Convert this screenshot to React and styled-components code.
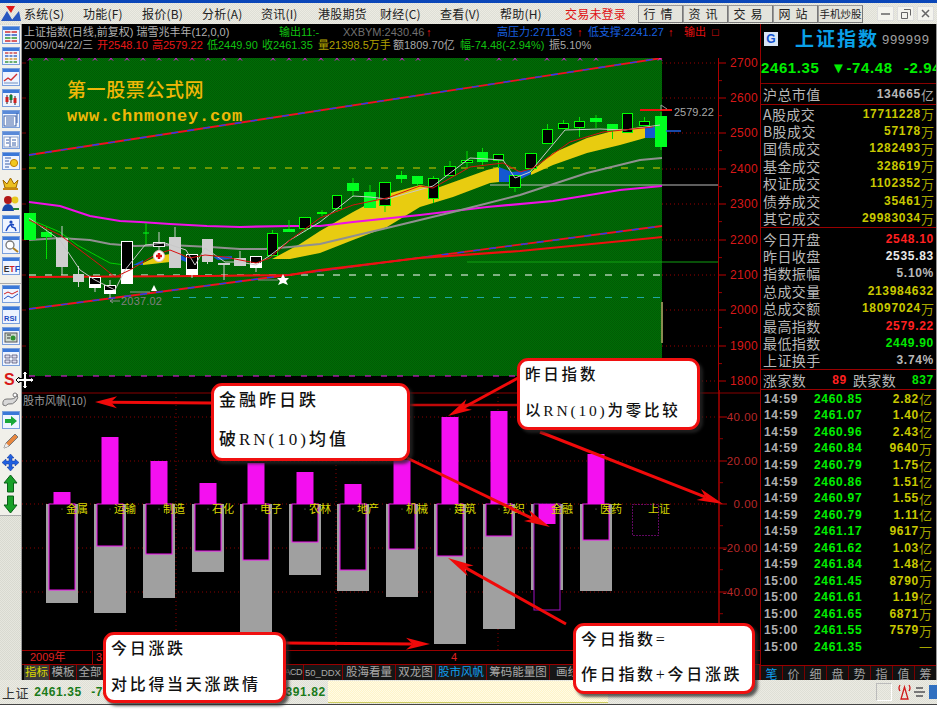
import React from 'react';
import styled, { createGlobalStyle } from 'styled-components';

const SANS = '"Liberation Sans","Noto Sans CJK SC",sans-serif';
const CJK = '"Noto Sans CJK SC","Liberation Sans",sans-serif';
const SERIF = '"Liberation Serif","Noto Sans CJK SC",serif';
const DITHER = 'repeating-conic-gradient(#ecebe3 0 25%, #dedfd6 0 50%) 0 0/2px 2px';

const Global = createGlobalStyle`
  html, body { margin: 0; padding: 0; background: #fff; }
  #root { width: 943px; height: 713px; overflow: hidden; position: relative; }
`;
const Page = styled.div`width:943px;height:713px;position:relative;background:#fff;overflow:hidden;`;
const Win = styled.div`width:937px;height:705px;display:flex;flex-direction:column;border-bottom:1px solid #444;box-sizing:border-box;`;
const TitleLine = styled.div`height:3px;background:#0a46b8;`;
const MenuBar = styled.div`height:21px;display:flex;align-items:center;background:${DITHER};font-family:${CJK};font-size:12px;color:#222;`;
const Logo = styled.div`width:27px;height:21px;display:flex;align-items:center;`;
const MenuItem = styled.div`width:${p=>p.$w}px;flex:none;white-space:nowrap;color:${p=>p.$c||'#222'};letter-spacing:.2px;`;
const TopBtn = styled.div`width:45px;height:18px;flex:none;box-sizing:border-box;display:flex;align-items:center;justify-content:center;white-space:nowrap;border:1px solid #999;border-right-color:#777;border-bottom-color:#777;background:#e4e4dc;letter-spacing:${p=>p.$s}px;font-size:${p=>p.$fs||12}px;color:#222;`;
const WinBtn = styled.div`width:17px;height:15px;flex:none;margin-right:3px;display:flex;align-items:center;justify-content:center;background:#f4f4ee;border:1px solid #ddd;box-sizing:border-box;color:#777;`;
const MenuGap = styled.div`width:${p=>p.$w}px;flex:none;`;
const Body = styled.div`height:656px;display:flex;`;
const ToolBar = styled.div`width:22px;flex:none;display:flex;flex-direction:column;background:repeating-conic-gradient(#e6e6de 0 25%, #d8d9d0 0 50%) 0 0/2px 2px;box-sizing:border-box;border-right:1px solid #999;padding-top:.5px;`;
const ToolCell = styled.div`height:21px;flex:none;display:flex;align-items:center;justify-content:center;background:#f1f0ea;`;
const ToolSep = styled.div`height:${p=>p.$h}px;flex:none;background:#f1f0ea;border-bottom:1px solid #aaa;box-sizing:border-box;`;
const ChartCol = styled.div`width:738px;flex:none;display:flex;flex-direction:column;background:#000;`;
const ChartHead = styled.div`height:34px;flex:none;padding:2px 0 0 2px;box-sizing:border-box;font-family:${SANS};font-size:11px;display:flex;flex-direction:column;`;
const HeadRow = styled.div`height:13px;display:flex;align-items:center;white-space:nowrap;`;
const HeadCell = styled.span`width:${p=>p.$w}px;flex:none;color:${p=>p.$c};white-space:nowrap;letter-spacing:${p=>p.$s||0}px;line-height:1;`;
const ChartSvg = styled.svg`display:block;flex:none;`;
const DateBar = styled.div`height:15px;flex:none;display:flex;border-top:1px solid #900;border-bottom:1px solid #900;box-sizing:border-box;font-family:${SANS};font-size:11px;color:#e02020;`;
const DateCell = styled.div`width:${p=>p.$w}px;flex:none;padding-left:${p=>p.$pl||0}px;box-sizing:border-box;border-right:${p=>p.$b?'1px solid #900':'none'};line-height:13px;`;
const TabBar = styled.div`height:15px;flex:none;display:flex;font-family:${SANS};font-size:11.5px;line-height:1;padding-left:2px;border-bottom:1px solid #800;box-sizing:content-box;`;
const Tab = styled.div`width:${p=>p.$w}px;flex:none;box-sizing:border-box;display:flex;align-items:center;justify-content:${p=>p.$end?'flex-end':'center'};padding-right:${p=>p.$end?1:0}px;white-space:nowrap;font-size:${p=>p.$fs||11.5}px;letter-spacing:${p=>p.$ls||0}px;border-right:1px solid #800;background:${p=>p.$bg||'#161616'};color:${p=>p.$c||'#a8a8a8'};`;
const Panel = styled.div`width:177px;flex:none;background:#000;border-left:1px solid #900;border-right:1px solid #999;box-sizing:border-box;display:flex;flex-direction:column;overflow:hidden;font-family:${CJK};`;
const NameRow = styled.div`height:28px;flex:none;display:flex;align-items:center;padding:2px 0 0 3px;box-sizing:border-box;`;
const GIcon = styled.div`width:14px;height:14px;background:#d8e4f4;color:#1050d0;font:700 12px ${SANS};display:flex;align-items:center;justify-content:center;margin-right:17px;`;
const IndexName = styled.div`font:700 19px/1 ${SERIF};color:#0aa0e8;letter-spacing:2px;width:87px;white-space:nowrap;`;
const IndexCode = styled.div`font:13px ${SANS};color:#a0a0a0;letter-spacing:.7px;`;
const PriceRow = styled.div`height:32px;flex:none;display:flex;align-items:center;font:700 15px ${SANS};color:#0e0;letter-spacing:.6px;border-bottom:1px solid #800;box-sizing:border-box;white-space:nowrap;`;
const PriceCell = styled.div`width:${p=>p.$w}px;flex:none;`;
const Block = styled.div`height:${p=>p.$h}px;flex:none;box-sizing:border-box;border-bottom:1px solid #900;display:flex;flex-direction:column;padding-top:${p=>p.$pt||0}px;`;
const DataRow = styled.div`height:${p=>p.$h||17.4}px;flex:none;display:flex;align-items:center;justify-content:space-between;padding:0 2px 0 2px;`;
const Label = styled.span`font-size:14px;color:#b8b8b8;letter-spacing:.4px;line-height:1;white-space:nowrap;`;
const Val = styled.span`font:700 12px/1 ${SANS};color:${p=>p.$c};letter-spacing:.7px;white-space:nowrap;display:flex;align-items:center;margin-left:${p=>p.$ml||'0'};margin-right:${p=>p.$mr||0}px;`;
const Unit = styled.span`font:13px/1 ${CJK};color:${p=>p.$c||'#a6a600'};letter-spacing:0;`;
const Updown = styled.div`height:20px;flex:none;box-sizing:border-box;border-bottom:1px solid #900;display:flex;align-items:center;padding:0 2px 0 2px;`;
const TickList = styled.div`height:275px;flex:none;padding-top:.7px;box-sizing:border-box;`;
const TickRow = styled.div`height:16.53px;display:grid;grid-template-columns:50px 70px 1fr;align-items:center;padding:0 4px 0 3px;font:700 12px/1 ${SANS};letter-spacing:.7px;`;
const TickTime = styled.span`color:#b0b0b0;`;
const TickPrice = styled.span`color:#0e0;`;
const TickVol = styled.span`color:#c8c800;display:flex;justify-content:flex-end;align-items:center;`;
const PanelTabs = styled.div`height:15px;flex:none;display:flex;border-top:1px solid #900;border-bottom:1px solid #800;box-sizing:content-box;background:#111;`;
const PanelTab = styled.div`width:22px;flex:none;display:flex;align-items:center;justify-content:center;box-sizing:border-box;border-right:1px solid #700;font-size:12px;line-height:1;color:${p=>p.$c||'#a0a0a0'};`;
const Status = styled.div`height:24px;flex:none;display:flex;align-items:center;background:${DITHER};font:700 12px ${SANS};color:#1a7a1a;letter-spacing:.6px;`;
const StatusCell = styled.div`width:${p=>p.$w}px;flex:none;white-space:nowrap;`;
const StatusLabel = styled.span`font:13px ${CJK};color:#333;margin:0 5px 0 2px;`;
const NoteArea = styled.div`width:280px;height:22px;flex:none;background:repeating-conic-gradient(#fffbe6 0 25%, #fff4c8 0 50%) 0 0/2px 2px;border-bottom:1px solid #cccc60;box-sizing:border-box;`;
const StatusFill = styled.div`flex:1;`;
const StatusBox = styled.div`width:16px;height:18px;border:1px solid #bbb;border-right-color:#fff;border-bottom-color:#fff;margin-right:5px;box-sizing:border-box;`;
const StatusIcon = styled.div`width:15px;flex:none;display:flex;justify-content:center;`;
const StatusEdge = styled.div`width:8px;height:14px;background:#3070c0;margin-left:2px;flex:none;`;
const Callout = styled.div`position:absolute;left:${p=>p.$x}px;top:${p=>p.$y}px;width:${p=>p.$w}px;height:${p=>p.$h}px;box-sizing:border-box;background:#fff;border:3px solid #f01010;border-radius:11px;box-shadow:3px 3px 3px rgba(40,40,40,.75);padding:${p=>p.$pt}px 0 0 5px;display:flex;flex-direction:column;gap:${p=>p.$gap}px;font-family:${SERIF};font-weight:500;font-size:${p=>p.$fs}px;line-height:20px;color:#111;letter-spacing:${p=>p.$ls}px;white-space:nowrap;`;
const Overlay = styled.svg`position:absolute;left:0;top:0;pointer-events:none;`;
const Cursor = styled.svg`position:absolute;left:15px;top:370px;`;

const Frame = ({ children, title = '#3a78d8' }) => (
  <svg width="18" height="18" viewBox="0 0 18 18">
    <rect x=".5" y=".5" width="17" height="17" fill="#eef4ff" stroke="#7aa0dc" />
    <rect x="1" y="1" width="16" height="3" fill={title} />
    {children}
  </svg>
);
const Plain = ({ children }) => <svg width="19" height="19" viewBox="0 0 19 19">{children}</svg>;
const Stripes = ({ c }) => [6, 9, 12, 15].map((y, i) => <line key={y} x1="3" x2="15" y1={y} y2={y} stroke={c[i % c.length]} strokeWidth="1.4" />);
const icons = [
  <Frame><Stripes c={['#d02020', '#2050c0', '#209020']} /><line x1="9" x2="9" y1="5" y2="16" stroke="#fff" /></Frame>,
  <Frame><Stripes c={['#d04040', '#3060c0', '#d09020', '#309030']} /><path d="M7 5V16M11 5V16" stroke="#fff" /></Frame>,
  <Frame><path d="M2 13L6 10L9 12L15 6" fill="none" stroke="#d03030" strokeWidth="1.4" /><path d="M2 15H16" stroke="#7090c0" /></Frame>,
  <Frame><path d="M5 6V15M9 5V14M13 7V16" stroke="#222" /><rect x="3.5" y="8" width="3" height="5" fill="#d02020" /><rect x="7.5" y="6" width="3" height="5" fill="#108030" /><rect x="11.5" y="9" width="3" height="5" fill="#d02020" /></Frame>,
  <Frame title="#5a8ad8"><rect x="2" y="6" width="12" height="10" fill="#fff" stroke="#3a60a8" /><path d="M4 8H12M4 10H12M4 12H12M4 14H12" stroke="#3a60a8" /><path d="M15 3V13" stroke="#3a60a8" /></Frame>,
  <Frame title="#5a8ad8"><rect x="2" y="6" width="14" height="10" fill="#fff" stroke="#8aa0c8" /><path d="M8 6V16M4 9H7M4 12H7M10 9H14M10 12H14M10 14H14" stroke="#3a60a8" /></Frame>,
  <Frame><path d="M3 6H9M3 9H7M3 12H8M3 15H7" stroke="#3a60a8" /><circle cx="12" cy="11" r="3.6" fill="#f0c820" stroke="#c08000" /></Frame>,
  <Plain><path d="M2 7L6 11L9.500 5L13 11L17 7L15 15H4Z" fill="#ecc020" stroke="#a06800" /><rect x="2" y="15" width="15" height="2" fill="#c88810" /></Plain>,
  <Plain><circle cx="7" cy="6" r="4" fill="#b01818" /><path d="M1 17Q2 10 7 10Q12 10 13 17Z" fill="#1848a8" /><circle cx="14" cy="6" r="3.400" fill="#e8c820" /><path d="M12 15H18" stroke="#208030" strokeWidth="2" /></Plain>,
  <Frame><circle cx="9" cy="7" r="1.600" fill="#1848c0" /><path d="M9 9L6 12L4 16M9 9L10 12L13 13L14 16M9 9L12 10" fill="none" stroke="#1848c0" strokeWidth="1.500" /></Frame>,
  <Frame><circle cx="8" cy="9" r="4" fill="#fff" stroke="#777" strokeWidth="1.300" /><path d="M11 12L16 16" stroke="#b08020" strokeWidth="2" /></Frame>,
  <Frame><text x="1.800" y="14.500" fontFamily={SANS} fontSize="8.500" fontWeight="700" fill="#333">E<tspan fill="#d02020">T</tspan><tspan fill="#1848c0">F</tspan></text></Frame>,
  null,
  <Frame><path d="M2 9L6 7L10 9L16 6" fill="none" stroke="#d02020" /><path d="M2 14L6 11L10 13L16 9" fill="none" stroke="#2050c0" /></Frame>,
  <Frame><text x="2" y="14.500" fontFamily={SANS} fontSize="7.500" fontWeight="700" fill="#1848c0">RSI</text></Frame>,
  <Frame><rect x="3" y="6" width="12" height="9" fill="#ccd8cc" stroke="#555" /><circle cx="11" cy="11" r="2.500" fill="#309030" /><path d="M5 8H9M5 11H8" stroke="#333" /></Frame>,
  <Frame><path d="M3 7H8V10H3ZM10 7H15V10H10ZM3 12H8V15H3ZM10 12H15V15H10Z" fill="#dde" stroke="#446" strokeWidth=".7" /></Frame>,
  <Plain><text x="3" y="16" fontFamily={SANS} fontSize="16" fontWeight="700" fill="#d81818">S</text></Plain>,
  <Plain><path d="M2 15Q1 9 6 9H10Q15 9 16 4Q18 8 15 11Q12 15 7 14Q5 17 2 15Z" fill="#d8d8d8" stroke="#777" /><circle cx="14" cy="5" r="2" fill="#fff" stroke="#777" /></Plain>,
  <Frame><path d="M3 8H9V5L15 10L9 15V12H3Z" fill="#18a838" /></Frame>,
  <Plain><path d="M3 16L5 11L14 2L17 5L8 14Z" fill="#e88840" stroke="#777" /><path d="M3 16L5 11L8 14Z" fill="#eee" /></Plain>,
  <Plain><path d="M9.500 1L13 5H11V8H14V6L18 9.500L14 13V11H11V14H13L9.500 18L6 14H8V11H5V13L1 9.500L5 6V8H8V5H6Z" fill="#2060e0" stroke="#103090" strokeWidth=".5" /></Plain>,
  <Plain><path d="M9.500 1L16 9H12.500V18H6.500V9H3Z" fill="#18a028" stroke="#0a6018" /></Plain>,
  <Plain><path d="M9.500 18L16 10H12.500V1H6.500V10H3Z" fill="#18a028" stroke="#0a6018" /></Plain>,
];

const CANDLES = [
  [24,36,213,240,213,240,'g'],[41,52,232,237,227,259,'g'],[56,68,238,267,226,275,'s'],[73,84,274,282,266,287,'s'],
  [89,101,277,288,277,292,'w',284],[104,116,285,294,280,298,'w',290],[121,133,241,284,241,284,'w',269],[143,149,233,233,223,245,'g'],
  [153,165,242,247,232,262,'wo'],[169,181,237,268,227,268,'s'],[186,198,254,275,254,278,'w',269],[202,213,239,262,239,264,'s'],
  [218,230,263,265,263,280,'s'],[234,246,258,266,251,266,'s'],[250,262,256,268,256,272,'w',263],[267,278,233,256,230,256,'o'],
  [283,295,229,232,220,232,'g'],[299,311,217,229,217,232,'o'],[317,327,212,214,210,216,'o'],[332,342,195,209,195,212,'o'],
  [347,359,183,191,178,197,'g'],[364,376,192,208,185,208,'g'],[379,391,182,206,182,212,'o'],[396,407,175,179,171,183,'g'],
  [412,423,176,184,176,186,'g'],[428,439,178,199,176,203,'o'],[444,456,166,176,161,176,'o'],[461,473,160,163,151,168,'o'],
  [477,488,152,162,148,166,'g'],[493,504,154,161,154,168,'o'],[509,521,175,188,175,192,'o'],[525,537,153,169,153,172,'o'],
  [542,553,129,144,124,144,'o'],[558,569,123,129,120,129,'o'],[574,585,121,128,117,137,'o'],[590,602,118,122,115,128,'g'],
  [607,618,124,131,124,139,'g'],[622,633,113,133,113,133,'o'],[639,650,121,126,117,126,'o'],[655,667,116,147,112,150,'g'],
];
const CROSS = [30,46,62,79,95,111,127,143,159,176,192,208,224,240,273,289,305,321,337,353,369,385,402,418,467,499,515,547,564,580,596,660];
const PRICES = [[2700,63],[2600,98],[2500,133],[2400,169],[2300,204],[2200,240],[2100,275],[2000,310],[1900,346],[1800,381]];
const pts = a => a.map(p => p.join(',')).join(' ');

const Candle = ({ c }) => {
  const [x0, x1, t, b, wt, wb, k, split] = c;
  const cx = (x0 + x1) / 2;
  const isG = k === 'g' || k === 'o';
  const w = x1 - x0, h = Math.max(b - t, 0.01);
  return (
    <g>
      <line x1={cx} x2={cx} y1={wt} y2={wb} stroke={isG ? '#00e000' : '#d0d0d0'} />
      {k === 'g' && h > 1 && <rect x={x0} y={t} width={w} height={h} fill="#00ff20" />}
      {k === 'g' && h <= 1 && <line x1={x0} x2={x1} y1={t} y2={t} stroke="#00ff20" />}
      {k === 'o' && <rect x={x0 + .5} y={t + .5} width={w - 1} height={h - 1} fill="#000" stroke="#00ff00" />}
      {k === 's' && <rect x={x0} y={t} width={w} height={h} fill="#cfcfcf" />}
      {k === 'wo' && <rect x={x0 + .5} y={t + .5} width={w - 1} height={h - 1} fill="#000" stroke="#eee" />}
      {k === 'w' && <><rect x={x0} y={t} width={w} height={h} fill="#fff" /><rect x={x0 + 1} y={t + 1} width={w - 2} height={split - t - 1} fill="#000" /></>}
    </g>
  );
};

const MainChart = () => (
  <ChartSvg width="738" height="332" viewBox="22 58 738 332">
    <defs>
      <pattern id="gd" width="2" height="2" patternUnits="userSpaceOnUse">
        <rect width="2" height="2" fill="#006c06" /><rect width="1" height="1" fill="#005c04" /><rect x="1" y="1" width="1" height="1" fill="#005c04" />
      </pattern>
    </defs>
    <rect x="29" y="58" width="633" height="318" fill="url(#gd)" />
    {PRICES.map(([v, y]) => <g key={v}>
      <line x1="662" x2="718" y1={y} y2={y} stroke="#900" strokeDasharray="1 3" />
      <line x1="718" x2="726" y1={y} y2={y} stroke="#b00" />
      <line x1="718" x2="722" y1={y + 17.600} y2={y + 17.600} stroke="#900" />
      <line x1="22" x2="26" y1={y} y2={y} stroke="#700" />
      <text x="758" y={y + 4} textAnchor="end" fontFamily={SANS} fontSize="12" fill="#d81818" letterSpacing=".3">{v}</text>
    </g>)}
    <line x1="718.500" x2="718.500" y1="58" y2="390" stroke="#a00" />
    <line x1="29" x2="662" y1="168" y2="168" stroke="#d8c800" strokeDasharray="7 9" />
    <line x1="29" x2="662" y1="275" y2="275" stroke="#fff" strokeDasharray="7 9" />
    <line x1="173" x2="662" y1="297.500" y2="297.500" stroke="#20a8a8" strokeDasharray="7 9" />
    <line x1="490" x2="718" y1="185" y2="185" stroke="#bbb" />
    <line x1="467" x2="718" y1="262" y2="262" stroke="#10a010" />
    <line x1="29" x2="662" y1="376" y2="376" stroke="#f010f0" strokeDasharray="6 10" />
    <line x1="662" x2="662" y1="302" y2="343" stroke="#8a8a50" strokeWidth="2" />
    <text x="67" y="97" fontFamily={SERIF} fontSize="19" fontWeight="500" fill="#f0b808" letterSpacing=".6">第一股票公式网</text>
    <text x="67" y="121" fontFamily='"Liberation Mono",monospace' fontSize="17" fontWeight="700" fill="#f0b808" letterSpacing=".8">www.chnmoney.com</text>
    {[[29,155,662,58],[29,309,662,226]].map((l, i) => <g key={i}>
      <line x1={l[0]} y1={l[1]} x2={l[2]} y2={l[3]} stroke="#f01020" strokeWidth="1.800" />
      <line x1={l[0]} y1={l[1]} x2={l[2]} y2={l[3]} stroke="#2040f0" strokeWidth="1.400" strokeDasharray="7 9" />
    </g>)}
    <polygon fill="#e8cc10" points={pts([[272,259],[300,244],[320,231],[353,212],[387,194],[420,185],[437,188],[487,170],[499,167],[499,182],[490,183],[453,197],[420,207],[387,227],[353,240],[320,253],[290,259]])} />
    <polygon fill="#1458d0" points={pts([[499,167],[512,172],[530,170],[531,174],[515,182],[499,182]])} />
    <polygon fill="#e8cc10" points={pts([[531,172],[553,153],[587,138],[620,129],[645,127],[645,138],[620,145],[587,153],[553,165],[531,175]])} />
    <polygon fill="#1458d0" points={pts([[645,127],[656,127],[656,138],[645,138]])} />
    <polygon fill="#e8cc10" points={pts([[143,263],[158,256],[170,254],[170,262],[143,265]])} />
    <polygon fill="#1458d0" points={pts([[133,265],[143,260],[143,265]])} />
    <polygon fill="#1458d0" points={pts([[181,255],[186,258],[186,262],[181,260]])} />
    <polygon fill="#1458d0" points={pts([[213,257],[232,256],[232,259],[218,260]])} />
    <polyline fill="none" stroke="#ee1010" strokeWidth="2.200" points={pts([[29,277],[207,276],[290,275],[320,270],[420,258],[520,251],[653,238],[662,237]])} />
    <polyline fill="none" stroke="#f010e8" strokeWidth="2.200" points={pts([[29,202],[60,206],[90,216],[120,221],[140,222],[170,224],[207,226],[240,227],[290,226],[320,226],[353,222],[420,215],[487,207],[553,201],[620,190],[662,186]])} />
    <polyline fill="none" stroke="#909090" strokeWidth="2" points={pts([[29,240],[60,238],[90,240],[110,244],[135,246],[170,245],[190,246],[210,247],[240,249],[265,249],[290,247],[320,244],[387,228],[453,212],[520,195],[587,173],[640,160],[662,158]])} />
    <polyline fill="none" stroke="#00d000" strokeWidth="1" points={pts([[29,219],[60,232],[77,245],[110,263],[125,265]])} />
    {CANDLES.map((c, i) => <Candle key={i} c={c} />)}
    <polyline fill="none" stroke="#c8c8c8" strokeWidth="1" points={pts([[29,218],[60,240],[80,270],[95,280],[115,290],[125,270],[145,245],[165,243],[186,250],[195,265],[205,248],[225,262],[240,262],[256,265],[272,254],[290,240],[320,222],[353,196],[370,197],[387,199],[433,186],[470,158],[503,160],[515,178],[530,172],[565,130],[600,129],[625,130],[660,125]])} />
    <polyline fill="none" stroke="#d81010" strokeWidth="1" points={pts([[29,220],[60,235],[80,250],[100,265],[115,277],[130,270],[155,255],[170,250],[190,258],[205,255],[225,257],[240,260],[256,263],[270,258],[290,240],[320,218],[353,205],[387,198],[420,186],[433,188],[470,167],[503,163],[520,172],[533,168],[570,142],[603,132],[653,127]])} />
    <circle cx="159" cy="256" r="5.500" fill="#fff" stroke="#e8c0c0" /><path d="M156 256H162M159 253V259" stroke="#e01010" strokeWidth="2.500" />
    <polygon fill="#fff" points="154,285 157,291 151,291" />
    <line x1="258" x2="278" y1="280" y2="280" stroke="#888" />
    <polygon fill="#fff" points={pts([[283,274],[285,278],[289,278],[286,281],[288,285],[283,283],[278,285],[280,281],[277,278],[281,278]])} />
    <line x1="130" x2="150" y1="292" y2="292" stroke="#999" />
    <path d="M110 301H120M110 301L113 299M110 301L113 303" stroke="#8a8a8a" fill="none" />
    <text x="121" y="305" fontFamily={SANS} fontSize="11" fill="#808080" letterSpacing=".2">2037.02</text>
    <line x1="640" x2="672" y1="110" y2="110" stroke="#f01010" strokeWidth="2" />
    <path d="M661 105L667 109M661 105V110" stroke="#999" fill="none" />
    <text x="674" y="116" fontFamily={SANS} fontSize="11" fill="#a8a8a8">2579.22</text>
    <line x1="666" x2="681" y1="131" y2="131" stroke="#2060e0" strokeWidth="1.500" />
    {CROSS.map(x => <g key={x} stroke="#f010f0"><line x1={x - 2} x2={x + 2} y1="56.500" y2="60.500" /><line x1={x - 2} x2={x + 2} y1="60.500" y2="56.500" /></g>)}
  </ChartSvg>
);

const SECTORS = [
  ['金属',46,603,590,492],['运输',94,613,546,437],['制造',143,598,554,461],['石化',192,572,551,483],
  ['电子',240,632,560,463],['农林',289,575,542,472],['地产',337,591,570,484],['机械',386,597,549,460],
  ['建筑',434,644,556,417],['纺织',483,629,536,411],
];
const LEVELS = [['40.00',417],['20.00',461],['0.00',504],['-20.00',548],['-40.00',592]];

const Sector = ({ x, name, gray, out, bar, dim }) => (
  <g>
    <rect x={x} y="504" width="32" height={gray - 504} fill="#a0a0a0" />
    <rect x={x + 3} y="504" width="26" height={out - 504} fill="#000" stroke={dim ? '#a010c0' : '#f010f0'} />
    {bar < 504
      ? <rect x={x + 7.500} y={bar} width="17" height={504 - bar} fill="#f410f0" />
      : <rect x={x + 7.500} y="504" width="17" height={bar - 504} fill="#f410f0" />}
    <text x={x + 20} y="513" fontFamily={CJK} fontSize="11" fill="#d8d800">{name}</text>
    <circle cx={x + 16} cy="509" r=".6" fill="#888" />
  </g>
);

const Indicator = () => (
  <ChartSvg width="738" height="260" viewBox="22 390 738 260">
    <line x1="22" x2="760" y1="393" y2="393" stroke="#800" />
    <line x1="719" x2="719" y1="390" y2="650" stroke="#a00" strokeWidth="1.500" />
    {LEVELS.map(([t, y]) => <g key={t}>
      <line x1="22" x2="719" y1={y} y2={y} stroke="#800" strokeDasharray="1 3" />
      <line x1="719" x2="727" y1={y} y2={y} stroke="#b00" />
      <line x1="719" x2="723" y1={y + 21.700} y2={y + 21.700} stroke="#800" />
      <text x="758" y={y + 4} textAnchor="end" fontFamily={SANS} fontSize="11.500" fill="#b82828" letterSpacing=".5">{t}</text>
    </g>)}
    {[176, 336, 498].map(x => <line key={x} x1={x} x2={x} y1="393" y2="650" stroke="#800" strokeDasharray="1 3" />)}
    <text x="23" y="405" fontFamily={CJK} fontSize="11" fill="#9a9a9a">股市风帆(10)</text>
    {SECTORS.map(s => <Sector key={s[0]} name={s[0]} x={s[1]} gray={s[2]} out={s[3]} bar={s[4]} />)}
    <Sector name="金融" x={531} gray={590} out={610} bar={524} dim />
    <Sector name="医药" x={580} gray={591} out={540} bar={454} />
    <rect x="632.500" y="504.500" width="26" height="31" fill="none" stroke="#c010c0" strokeDasharray="1 2" />
    <text x="648" y="513" fontFamily={CJK} fontSize="11" fill="#d8d800">上证</text>
  </ChartSvg>
);

const ROWS_A = [['A股成交','17711228'],['B股成交','57178'],['国债成交','1282493'],['基金成交','328619'],['权证成交','1102352'],['债券成交','35461'],['其它成交','29983034']];
const ROWS_B = [['今日开盘','2548.10','#ff2020'],['昨日收盘','2535.83','#e8e8e8'],['指数振幅','5.10%','#b8b8b8'],['总成交量','213984632','#c8c800'],['总成交额','18097024','#c8c800','万'],['最高指数','2579.22','#ff2020'],['最低指数','2449.90','#00e800'],['上证换手','3.74%','#b8b8b8']];
const TICKS = [['14:59','2460.85','2.82','亿'],['14:59','2461.07','1.40','亿'],['14:59','2460.96','2.43','亿'],['14:59','2460.84','9640','万'],['14:59','2460.79','1.75','亿'],['14:59','2460.86','1.51','亿'],['14:59','2460.97','1.55','亿'],['14:59','2460.79','1.11','亿'],['14:59','2461.17','9617','万'],['14:59','2461.62','1.03','亿'],['14:59','2461.84','1.48','亿'],['15:00','2461.45','8790','万'],['15:00','2461.61','1.19','亿'],['15:00','2461.65','6871','万'],['15:00','2461.55','7579','万'],['15:00','2461.35','','一']];

const RightPanel = () => (
  <Panel>
    <NameRow><GIcon>G</GIcon><IndexName>上证指数</IndexName><IndexCode>999999</IndexCode></NameRow>
    <PriceRow><PriceCell $w={70}>2461.35</PriceCell><PriceCell $w={73}>▼-74.48</PriceCell><PriceCell $w={33}>-2.94</PriceCell></PriceRow>
    <Block $h={21}><DataRow $h={20}><Label>沪总市值</Label><Val $c="#b8b8b8">134665<Unit $c="#a8a8a8">亿</Unit></Val></DataRow></Block>
    <Block $h={123}>{ROWS_A.map(r => <DataRow key={r[0]}><Label>{r[0]}</Label><Val $c="#c8c800">{r[1]}<Unit>万</Unit></Val></DataRow>)}</Block>
    <Block $h={142} $pt={2}>{ROWS_B.map(r => <DataRow key={r[0]}><Label>{r[0]}</Label><Val $c={r[2]}>{r[1]}{r[3] && <Unit>{r[3]}</Unit>}</Val></DataRow>)}</Block>
    <Updown><Label>涨家数</Label><Val $c="#ff2020" $ml="26px" $mr={6}>89</Val><Label>跌家数</Label><Val $c="#00e800" $ml="auto">837</Val></Updown>
    <TickList>{TICKS.map((t, i) => <TickRow key={i}><TickTime>{t[0]}</TickTime><TickPrice>{t[1]}</TickPrice><TickVol>{t[2]}<Unit>{t[3]}</Unit></TickVol></TickRow>)}</TickList>
    <PanelTabs>{['笔','价','细','盘','势','指','值','筹'].map((t, i) => <PanelTab key={t} $c={i === 0 ? '#10a0f0' : undefined}>{t}</PanelTab>)}</PanelTabs>
  </Panel>
);

const TABS = [
  { t: '指标', w: 26, c: '#d8d800', bg: '#3a3a3a' }, { t: '模板', w: 27 }, { t: '全部', w: 27 }, { t: '', w: 160 },
  { t: 'MACD', w: 40, end: true, fs: 9, ls: -.5 }, { t: '50_DDX', w: 39, fs: 9.500 }, { t: '股海看量', w: 53 }, { t: '双龙图', w: 40 },
  { t: '股市风帆', w: 51, c: '#10a0f0' }, { t: '筹码能量图', w: 63 }, { t: '画线', w: 36 }, { t: '', w: 174 },
];

const Arrow = ({ a, b, h = 20, w = 8, sw = 3, c = '#f00a0a' }) => {
  const dx = b[0] - a[0], dy = b[1] - a[1], L = Math.hypot(dx, dy), ux = dx / L, uy = dy / L, nx = -uy, ny = ux;
  const base = [b[0] - ux * h, b[1] - uy * h], notch = [b[0] - ux * h * .72, b[1] - uy * h * .72];
  return <g>
    <line x1={a[0]} y1={a[1]} x2={notch[0]} y2={notch[1]} stroke={c} strokeWidth={sw} />
    <polygon fill={c} points={pts([b, [base[0] + nx * w, base[1] + ny * w], notch, [base[0] - nx * w, base[1] - ny * w]])} />
  </g>;
};

export default function App() {
  return (
    <Page>
      <Global />
      <Win>
        <TitleLine />
        <MenuBar>
          <Logo><svg width="24" height="20" viewBox="0 0 24 20"><path d="M6 2L15 2L11 9Z" fill="#e01818" /><path d="M1 17L7 7L13 17Z" fill="#2858c0" /><path d="M11 17L19 7L21 17Z" fill="#2858c0" /></svg></Logo>
          <MenuItem $w={59}>系统(S)</MenuItem><MenuItem $w={59}>功能(F)</MenuItem><MenuItem $w={60}>报价(B)</MenuItem><MenuItem $w={59}>分析(A)</MenuItem><MenuItem $w={57}>资讯(I)</MenuItem><MenuItem $w={62}>港股期货</MenuItem><MenuItem $w={60}>财经(C)</MenuItem><MenuItem $w={60}>查看(V)</MenuItem><MenuItem $w={65}>帮助(H)</MenuItem>
          <MenuItem $w={73} $c="#e01010">交易未登录</MenuItem>
          <TopBtn $s={5}>行情</TopBtn><TopBtn $s={5}>资讯</TopBtn><TopBtn $s={5}>交易</TopBtn><TopBtn $s={5}>网站</TopBtn><TopBtn $s={0} $fs={10.500}>手机炒股</TopBtn>
          <MenuGap $w={14} />
          <WinBtn><svg width="9" height="9"><path d="M0 5H9" stroke="#666" strokeWidth="1.500" /></svg></WinBtn>
          <WinBtn><svg width="10" height="10"><path d="M3 .5H9.500V6.500M.5 3.500H6.500V9.500H.5Z" fill="none" stroke="#666" /></svg></WinBtn>
          <WinBtn><svg width="9" height="9"><path d="M1 1L8 8M8 1L1 8" stroke="#666" strokeWidth="1.500" /></svg></WinBtn>
        </MenuBar>
        <Body>
          <ToolBar>
            {icons.map((ic, i) => ic
              ? <ToolCell key={i}>{ic}</ToolCell>
              : <ToolSep key={i} $h={7} />)}
            <ToolSep $h={1} />
          </ToolBar>
          <ChartCol>
            <ChartHead>
              <HeadRow>
                <HeadCell $w={255} $c="#b0b0b0">上证指数(日线,前复权) 瑞雪兆丰年(12,0,0)</HeadCell>
                <HeadCell $w={64} $c="#10c010">输出11:-</HeadCell>
                <HeadCell $w={83} $c="#707070">XXBYM:2430.46</HeadCell>
                <HeadCell $w={71} $c="#ff1010">↑</HeadCell>
                <HeadCell $w={80} $c="#1860e0">高压力:2711.83</HeadCell>
                <HeadCell $w={11} $c="#ff1010">↑</HeadCell>
                <HeadCell $w={80} $c="#1860e0">低支撑:2241.27</HeadCell>
                <HeadCell $w={16} $c="#ff1010">↑</HeadCell>
                <HeadCell $w={28} $c="#e01010">输出</HeadCell>
                <HeadCell $w={10} $c="#e01010">□</HeadCell>
              </HeadRow>
              <HeadRow>
                <HeadCell $w={73} $c="#a8a8a8">2009/04/22/三</HeadCell>
                <HeadCell $w={55} $c="#e81818">开2548.10</HeadCell>
                <HeadCell $w={55} $c="#e81818">高2579.22</HeadCell>
                <HeadCell $w={55} $c="#10c010">低2449.90</HeadCell>
                <HeadCell $w={56} $c="#10c010">收2461.35</HeadCell>
                <HeadCell $w={75} $c="#b0a000">量21398.5万手</HeadCell>
                <HeadCell $w={67} $c="#a8a8a8">额1809.70亿</HeadCell>
                <HeadCell $w={89} $c="#10c010">幅-74.48(-2.94%)</HeadCell>
                <HeadCell $w={50} $c="#a8a8a8">振5.10%</HeadCell>
              </HeadRow>
            </ChartHead>
            <MainChart />
            <Indicator />
            <DateBar><DateCell $w={71} $pl={8} $b>2009年</DateCell><DateCell $w={358} $pl={3}>3</DateCell><DateCell $w={100}>4</DateCell></DateBar>
            <TabBar>{TABS.map((t, i) => <Tab key={i} $w={t.w} $c={t.c} $bg={t.bg} $end={t.end} $fs={t.fs} $ls={t.ls}>{t.t}</Tab>)}</TabBar>
          </ChartCol>
          <RightPanel />
        </Body>
        <Status>
          <StatusLabel>上证</StatusLabel>
          <StatusCell $w={57}>2461.35</StatusCell>
          <StatusCell $w={187}>-74.48</StatusCell>
          <StatusCell $w={50}>1391.82</StatusCell>
          <NoteArea />
          <StatusFill />
          <StatusBox />
          <StatusIcon><svg width="13" height="18" viewBox="0 0 13 18"><path d="M6.500 4L3 16H10ZM2 2Q0 5 2 8M11 2Q13 5 11 8" fill="none" stroke="#d01818" strokeWidth="1.300" /></svg></StatusIcon>
          <StatusIcon><svg width="11" height="16" viewBox="0 0 11 16"><path d="M2 4H9M0 8H11M2 12H9" stroke="#777" strokeWidth="2" /></svg></StatusIcon>
          <StatusEdge />
        </Status>
      </Win>

      <Overlay width="943" height="713" viewBox="0 0 943 713">
        <Arrow a={[212, 403]} b={[95, 402]} h={22} w={6} />
        <line x1="410" x2="517" y1="405" y2="405" stroke="#c00808" strokeWidth="2.500" />
        <Arrow a={[518, 378]} b={[448, 416]} h={24} w={6} />
        <Arrow a={[407, 458]} b={[550, 527]} h={26} w={6} />
        <Arrow a={[540, 432]} b={[723, 504]} h={26} w={6} />
        <Arrow a={[566, 624]} b={[448, 558]} h={26} w={6} />
        <Arrow a={[285, 643]} b={[430, 644]} h={24} w={6} />
      </Overlay>
      <Callout $x={211} $y={383} $w={199} $h={78} $pt={5} $gap={19} $fs={17} $ls={3}>
        <span>金融昨日跌</span><span>破RN(10)均值</span>
      </Callout>
      <Callout $x={517} $y={358} $w={183} $h={72} $pt={4} $gap={16} $fs={15.500} $ls={2.800}>
        <span>昨日指数</span><span>以RN(10)为零比较</span>
      </Callout>
      <Callout $x={103} $y={632} $w={183} $h={71} $pt={4} $gap={16} $fs={16} $ls={2.700}>
        <span>今日涨跌</span><span>对比得当天涨跌情</span>
      </Callout>
      <Callout $x={573} $y={623} $w={182} $h={71} $pt={4} $gap={15} $fs={16} $ls={2.700}>
        <span>今日指数=</span><span>作日指数+今日涨跌</span>
      </Callout>
      <Cursor width="20" height="20" viewBox="0 0 20 20">
        <path d="M10 1L13 4H11.500V8.500H16V7L19 10L16 13V11.500H11.500V16H13L10 19L7 16H8.500V11.500H4V13L1 10L4 7V8.500H8.500V4H7Z" fill="#fff" stroke="#000" />
      </Cursor>
    </Page>
  );
}
